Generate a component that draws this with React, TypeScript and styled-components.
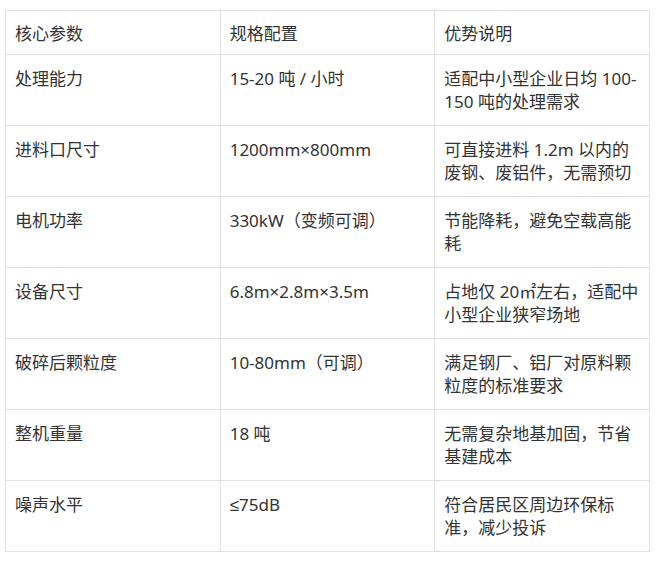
import React from "react"
import styled, { createGlobalStyle } from "styled-components"

const GlobalStyle = createGlobalStyle`
  html, body {
    margin: 0;
    padding: 0;
    background: #ffffff;
  }
  body {
    padding: 10px 0 0 5px;
    font-family: "Noto Sans", "Liberation Sans", "Noto Sans CJK SC", sans-serif;
    color: #333333;
  }
`

const SpecTable = styled.table`
  width: 645px;
  border-collapse: collapse;
  table-layout: fixed;
  font-size: 17px;
  line-height: 23px;
`

const HeadCell = styled.th`
  border: 1px solid #e2e2e2;
  padding: 11px 9px 9px;
  text-align: left;
  font-weight: 400;
  vertical-align: top;
`

const Cell = styled.td`
  border: 1px solid #e2e2e2;
  padding: 12px 9px 12px;
  vertical-align: top;
`

interface SpecRow {
  id: string
  name: string
  value: string
  note: string
}

const rows: SpecRow[] = [
  { id: "capacity", name: "处理能力", value: "15-20 吨 / 小时", note: "适配中小型企业日均 100-150 吨的处理需求" },
  { id: "inlet", name: "进料口尺寸", value: "1200mm×800mm", note: "可直接进料 1.2m 以内的废钢、废铝件，无需预切" },
  { id: "motor", name: "电机功率", value: "330kW（变频可调）", note: "节能降耗，避免空载高能耗" },
  { id: "size", name: "设备尺寸", value: "6.8m×2.8m×3.5m", note: "占地仅 20㎡左右，适配中小型企业狭窄场地" },
  { id: "grain", name: "破碎后颗粒度", value: "10-80mm（可调）", note: "满足钢厂、铝厂对原料颗粒度的标准要求" },
  { id: "weight", name: "整机重量", value: "18 吨", note: "无需复杂地基加固，节省基建成本" },
  { id: "noise", name: "噪声水平", value: "≤75dB", note: "符合居民区周边环保标准，减少投诉" },
]

export default function App(): React.JSX.Element {
  return (
    <>
      <GlobalStyle />
      <SpecTable>
        <thead>
          <tr>
            <HeadCell>核心参数</HeadCell>
            <HeadCell>规格配置</HeadCell>
            <HeadCell>优势说明</HeadCell>
          </tr>
        </thead>
        <tbody>
          {rows.map((row) => (
            <tr key={row.id}>
              <Cell>{row.name}</Cell>
              <Cell>{row.value}</Cell>
              <Cell>{row.note}</Cell>
            </tr>
          ))}
        </tbody>
      </SpecTable>
    </>
  )
}
